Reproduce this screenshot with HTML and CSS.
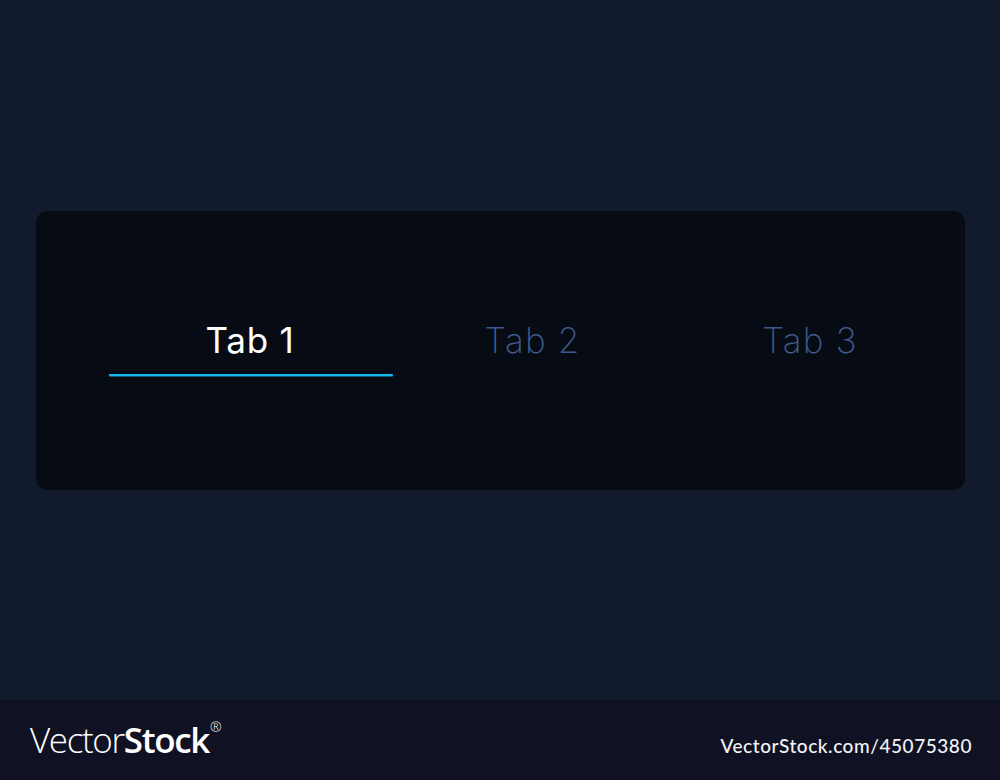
FILE: index.html
```html
<!DOCTYPE html>
<html lang="en">
<head>
    <meta charset="UTF-8">
    <meta name="viewport" content="width=device-width, initial-scale=1.0">
    <title>Tabs</title>
    <link rel="stylesheet" href="styles.css">
</head>
<body>
    <main class="stage">
        <div class="card">
            <div class="tabs">
                <div class="tab active">Tab 1</div>
                <div class="tab">Tab 2</div>
                <div class="tab">Tab 3</div>
            </div>
        </div>
    </main>

    <footer class="footer">
        <div class="logo">
            <span class="logo-light">Vector</span><span class="logo-bold">Stock</span><span class="logo-reg">®</span>
        </div>
        <div class="image-id">VectorStock.com/45075380</div>
    </footer>
</body>
</html>
```

FILE: styles.css
```css
* {
    margin: 0;
    padding: 0;
    box-sizing: border-box;
}

body {
    width: 1000px;
    height: 780px;
    overflow: hidden;
    display: flex;
    flex-direction: column;
    background: #121b2e;
    font-family: "Inter", "Liberation Sans", sans-serif;
}

.stage {
    flex: 1;
    padding: 211px 35px 0 36px;
}

.card {
    height: 279px;
    padding: 105px 15px 0 73px;
    background: #060b14;
    border-radius: 12px;
}

.tabs {
    display: grid;
    grid-template-columns: 284px 279px 276px;
}

.tab {
    height: 60px;
    padding-top: 3.5px;
    text-align: center;
    font-size: 35px;
    line-height: 40px;
    font-weight: 200;
    letter-spacing: 1.2px;
    color: #3f5a8c;
}

.tab.active {
    padding-right: 2px;
    font-weight: 400;
    letter-spacing: 0.8px;
    color: #ffffff;
    border-bottom: 2px solid #14b8ec;
    border-radius: 1px;
    box-shadow: 0 1px 0 rgba(20, 184, 236, 0.45);
}

.footer {
    height: 80px;
    padding: 0 28px 0 30px;
    display: flex;
    justify-content: space-between;
    align-items: center;
    background: #101223;
    color: #ffffff;
}

.logo {
    display: flex;
    align-items: flex-start;
    font-family: "Open Sans", "Liberation Sans", sans-serif;
    font-size: 35px;
    line-height: 40px;
    letter-spacing: -1.35px;
}

.logo-light {
    font-weight: 300;
}

.logo-bold {
    font-weight: 600;
}

.logo-reg {
    margin: -3px 0 0 1px;
    font-size: 14px;
    font-weight: 300;
    line-height: 20px;
    letter-spacing: 0;
}

.image-id {
    padding-top: 10px;
    font-family: "Lato", "Liberation Sans", sans-serif;
    font-size: 19px;
    font-weight: 500;
    letter-spacing: 0.55px;
    color: #f2f3f5;
}
```
